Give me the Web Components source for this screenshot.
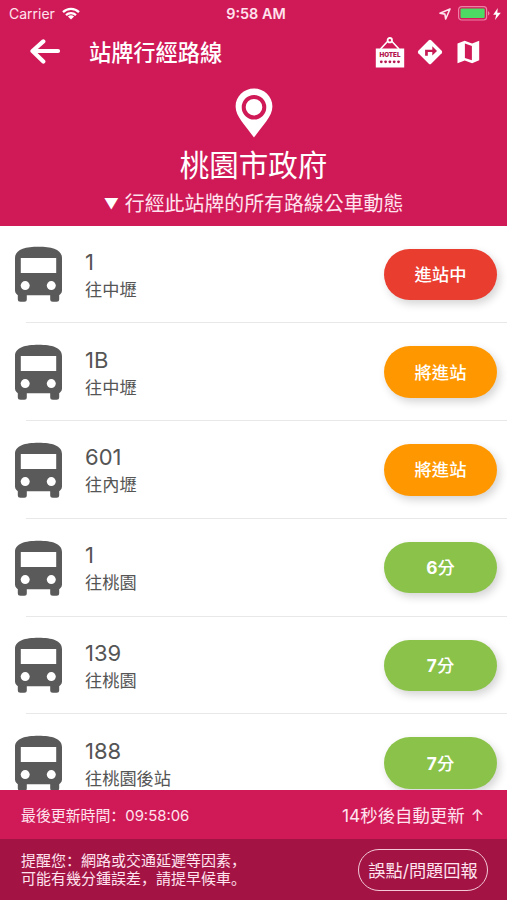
<!DOCTYPE html>
<html lang="zh-Hant">
<head>
<meta charset="utf-8">
<title>站牌行經路線</title>
<style>
    html, body { margin: 0; height: 100%; }
    body {
        --pink: #d01a57;
        --dark: #a31445;
        overflow: hidden;
        font-family: Inter, 'Noto Sans CJK TC', sans-serif;
        -webkit-font-smoothing: antialiased;
    }
</style>
</head>
<body>
<stop-page>
    <status-bar slot="top" carrier="Carrier" time="9:58 AM"></status-bar>
    <nav-bar slot="top">站牌行經路線</nav-bar>
    <stop-header slot="top" name="桃園市政府"><small>▼</small>行經此站牌的所有路線公車動態</stop-header>
    <bus-row route="1" to="往中壢"><status-pill kind="arriving">進站中</status-pill></bus-row>
    <bus-row route="1B" to="往中壢"><status-pill kind="soon">將進站</status-pill></bus-row>
    <bus-row route="601" to="往內壢"><status-pill kind="soon">將進站</status-pill></bus-row>
    <bus-row route="1" to="往桃園"><status-pill><b>6</b>分</status-pill></bus-row>
    <bus-row route="139" to="往桃園"><status-pill><b>7</b>分</status-pill></bus-row>
    <bus-row route="188" to="往桃園後站"><status-pill><b>7</b>分</status-pill></bus-row>
    <update-bar slot="bottom" updated="09:58:06" seconds="14"></update-bar>
    <notice-bar slot="bottom">
        <span lang="zh-Hans">提醒您：網路或交通延遲等因素，</span>
        <span lang="zh-Hans">可能有幾分鍾誤差，請提早候車。</span>
        <span slot="action">誤點/問題回報</span>
    </notice-bar>
</stop-page>

<script>
class BaseElement extends HTMLElement {
    constructor() {
        super();
        this.attachShadow({ mode: 'open' });
    }

    connectedCallback() {
        this.shadowRoot.innerHTML = this.render();
    }
}

class StopPage extends BaseElement {
    render() {
        return `
            <style>
                :host {
                    display: flex;
                    flex-direction: column;
                    height: 100vh;
                    background: white;
                }
                header, footer { flex: none; color: white; }
                header { background: var(--pink); height: 225.5px; }
                main { flex: 1; min-height: 0; overflow: hidden; }
            </style>
            <header><slot name="top"></slot></header>
            <main><slot></slot></main>
            <footer><slot name="bottom"></slot></footer>
        `;
    }
}

class StatusBar extends BaseElement {
    render() {
        return `
            <style>
                :host {
                    display: grid;
                    grid-template-columns: 1fr auto 1fr;
                    align-items: center;
                    height: 27px;
                    padding: 0 6px 0 9px;
                    font-size: 14px;
                    color: #ffe3ee;
                }
                .left, .right { display: flex; align-items: center; }
                .left { gap: 7px; }
                .right { justify-content: flex-end; }
                .time { font-size: 14.4px; font-weight: 600; margin-left: 2px; }
                svg { display: block; }
            </style>
            <div class="left">
                <span>${this.getAttribute('carrier')}</span>
                <svg width="18" height="13" viewBox="0 0 18 13" fill="none" stroke="#fff" stroke-width="2.3">
                    <path d="M1 5.1a11.6 11.6 0 0 1 16 0M4 8.1a7.4 7.4 0 0 1 10 0"/>
                    <path d="M9 12.4L5.9 9.6a4.6 4.6 0 0 1 6.2 0z" fill="#fff" stroke="none"/>
                </svg>
            </div>
            <span class="time">${this.getAttribute('time')}</span>
            <div class="right">
                <svg width="12" height="12" viewBox="0 0 12 12" fill="none" stroke="#ffe3ee" stroke-width="1.6" stroke-linejoin="round">
                    <path d="M11 1L1 5.3l4.9.8.8 4.9z"/>
                </svg>
                <svg style="margin-left:7px" width="32" height="15" viewBox="0 0 32 15">
                    <rect x=".6" y=".6" width="28" height="13.4" rx="3" fill="none" stroke="#ee7fa7" stroke-width="1.2"/>
                    <rect x="2.5" y="2.5" width="24.2" height="9.6" rx="1" fill="#4cd964"/>
                    <path d="M30 5v4.6q1.4-.7 1.4-2.3T30 5" fill="#ee7fa7"/>
                </svg>
                <svg style="margin-left:3px" width="8" height="12" viewBox="0 0 8 12" fill="#fff">
                    <path d="M4.8 0L.2 6.7h3L2 12l5.8-7.2H4.3z"/>
                </svg>
            </div>
        `;
    }
}

class NavBar extends BaseElement {
    render() {
        return `
            <style>
                :host {
                    display: flex;
                    align-items: center;
                    height: 50px;
                    padding: 0 27.5px 0 30px;
                }
                .title {
                    flex: 1;
                    margin-left: 28px;
                    padding-top: 1px;
                    font-size: 22.2px;
                    line-height: 50px;
                    font-weight: 500;
                }
                .icons { display: flex; align-items: center; gap: 12px; }
                svg { display: block; }
            </style>
            <svg width="31" height="26" viewBox="0 0 31 26" fill="none" stroke="#fff" stroke-width="4.2" stroke-linecap="round" stroke-linejoin="round">
                <path d="M13.300 2.4L2.5 12l10.800 10.500"/>
                <path d="M3.5 12h24.500"/>
            </svg>
            <span class="title"><slot></slot></span>
            <div class="icons">
                <svg width="30" height="31" viewBox="0 0 30 31">
                    <path d="M5.5 12L12.7 4.3M24 12L16.8 4.3" stroke="#fff" stroke-width="1.6"/>
                    <circle cx="14.8" cy="3.2" r="2.2" fill="none" stroke="#fff" stroke-width="1.8"/>
                    <path d="M.8 11.5h28.4v19H.8z" fill="#fff"/>
                    <text x="15" y="20.3" text-anchor="middle" textLength="21" lengthAdjust="spacingAndGlyphs" font-family="Inter, sans-serif" font-size="6.3" font-weight="900" fill="#b3174d">HOTEL</text>
                    <g fill="#b3174d"><circle cx="6.3" cy="24.8" r="1.4"/><circle cx="10.6" cy="24.8" r="1.4"/><circle cx="14.9" cy="24.8" r="1.4"/><circle cx="19.2" cy="24.8" r="1.4"/><circle cx="23.5" cy="24.8" r="1.4"/></g>
                </svg>
                <svg width="26" height="26" viewBox="0 0 26 26">
                    <path d="M11.8 1.3q1.2-1 2.4 0L24.7 11.8q1 1.2 0 2.4L14.2 24.7q-1.2 1-2.4 0L1.3 14.2q-1-1.2 0-2.4z" fill="#fff"/>
                    <path d="M8.1 16.8v-6h7.2V7.3l4.7 4.6-4.7 4.6v-3.4h-4.5v3.7z" fill="#c51a54"/>
                </svg>
                <svg style="margin-left:2px" width="23" height="24" viewBox="0 0 23 24">
                    <path d="M.5 3.5L7.7.8l7.4 2.6L22.2.8v19.5l-7.1 2.9-7.4-2.6-7.2 2.6z" fill="#fff"/>
                    <path d="M7.9 3.5l7 2.4v14.4l-7-2.4z" fill="#d01a57"/>
                </svg>
            </div>
        `;
    }
}

class StopHeader extends BaseElement {
    render() {
        return `
            <style>
                :host {
                    display: flex;
                    flex-direction: column;
                    align-items: center;
                    padding-top: 11px;
                }
                svg { display: block; }
                .name { font-size: 29.5px; line-height: 40px; margin-top: 7px; }
                .sub {
                    display: flex;
                    align-items: center;
                    gap: 6px;
                    font-size: 19.900px;
                    line-height: 30px;
                    margin-top: 4px;
                    color: #ffe3ee;
                }
                ::slotted(small) { font-size: 15px; color: white; }
            </style>
            <svg width="38" height="50" viewBox="0 0 38 50">
                <path d="M19 .6C8.8.6.6 8.6.6 18.5.6 28.5 10.5 37.5 19 49.6 27.5 37.5 37.4 28.5 37.4 18.5 37.4 8.6 29.2.6 19 .6z" fill="#fff"/>
                <circle cx="19" cy="19.2" r="10.3" fill="#fff" stroke="#d01a57" stroke-width="4"/>
            </svg>
            <div class="name">${this.getAttribute('name')}</div>
            <div class="sub"><slot></slot></div>
        `;
    }
}

class BusRow extends BaseElement {
    render() {
        return `
            <style>
                :host {
                    display: block;
                    height: 97.75px;
                    color: #555;
                }
                .row {
                    display: flex;
                    align-items: center;
                    height: 97.75px;
                    box-sizing: border-box;
                    padding: 0 10px 0 15px;
                    background: linear-gradient(#e8e8e8, #e8e8e8) 26px 100% / 100% 1px no-repeat;
                }
                .info { flex: 1; margin-left: 23px; padding-top: 3px; }
                .route { font-size: 22px; line-height: 27px; }
                .to { font-size: 17.2px; line-height: 27px; }
                svg { display: block; }
            </style>
            <div class="row">
                <svg width="47" height="56" viewBox="0 0 47 56">
                    <path d="M2.800 44h9v9.300q0 2.500-2.500 2.500H5.500q-2.700 0-2.700-2.500zM35.200 44h9v9.300q0 2.500-2.700 2.500h-3.600q-2.700 0-2.700-2.500z" fill="#5a5a5a"/>
                    <path d="M0 12C0 3.500 10 .7 23.500.7S47 3.500 47 12v32.500q0 2-1.500 3.500-1 1.200-2.500 1.200H4Q2.500 49.200 1.500 48 0 46.500 0 44.500z" fill="#5a5a5a"/>
                    <path d="M5.800 12h35.400v15H5.800z" fill="#fff"/>
                    <circle cx="10.200" cy="39.600" r="4.500" fill="#fff"/>
                    <circle cx="36.300" cy="39.600" r="4.500" fill="#fff"/>
                </svg>
                <div class="info">
                    <div class="route">${this.getAttribute('route')}</div>
                    <div class="to">${this.getAttribute('to')}</div>
                </div>
                <slot></slot>
            </div>
        `;
    }
}

class StatusPill extends BaseElement {
    render() {
        return `
            <style>
                :host {
                    display: grid;
                    place-content: center;
                    box-sizing: border-box;
                    width: 113px;
                    height: 51.5px;
                    padding-top: 1px;
                    border-radius: 26px;
                    background: #8bc34a;
                    color: white;
                    font-size: 17.3px;
                    font-weight: 500;
                    line-height: 26px;
                    box-shadow: 3px 4px 8px rgba(0 0 0 / 17%);
                }
                :host([kind="arriving"]) { background: #e93d30; }
                :host([kind="soon"]) { background: #ff9800; }
                ::slotted(b) { font-weight: 700; }
            </style>
            <span><slot></slot></span>
        `;
    }
}

class UpdateBar extends BaseElement {
    render() {
        return `
            <style>
                :host {
                    display: flex;
                    justify-content: space-between;
                    align-items: center;
                    height: 49px;
                    padding: 0 23px 0 21px;
                    background: var(--pink);
                    color: #ffe3ee;
                }
                .updated { font-size: 14.9px; font-family: Inter, 'Noto Sans CJK SC', sans-serif; }
                .next { font-size: 17.4px; display: flex; align-items: center; gap: 6px; }
                .arrow { font-size: 16px; }
            </style>
            <span class="updated" lang="zh-Hans">最後更新時間：${this.getAttribute('updated')}</span>
            <span class="next">${this.getAttribute('seconds')}秒後自動更新 <span class="arrow">↑</span></span>
        `;
    }
}

class NoticeBar extends BaseElement {
    render() {
        return `
            <style>
                :host {
                    display: flex;
                    justify-content: space-between;
                    align-items: center;
                    height: 61px;
                    padding: 0 19px 0 21px;
                    background: var(--dark);
                    color: #ffe3ee;
                }
                .text {
                    display: flex;
                    flex-direction: column;
                    font: 15px/17.5px 'Liberation Sans', 'Noto Sans CJK SC', sans-serif;
                }
                .report {
                    display: grid;
                    place-content: center;
                    box-sizing: border-box;
                    width: 130px;
                    height: 42px;
                    border: 1.5px solid #f3c8d8;
                    border-radius: 21px;
                    font-size: 17.2px;
                    white-space: nowrap;
                }
            </style>
            <div class="text"><slot></slot></div>
            <div class="report"><slot name="action"></slot></div>
        `;
    }
}

customElements.define('stop-page', StopPage);
customElements.define('status-bar', StatusBar);
customElements.define('nav-bar', NavBar);
customElements.define('stop-header', StopHeader);
customElements.define('bus-row', BusRow);
customElements.define('status-pill', StatusPill);
customElements.define('update-bar', UpdateBar);
customElements.define('notice-bar', NoticeBar);
</script>
</body>
</html>
